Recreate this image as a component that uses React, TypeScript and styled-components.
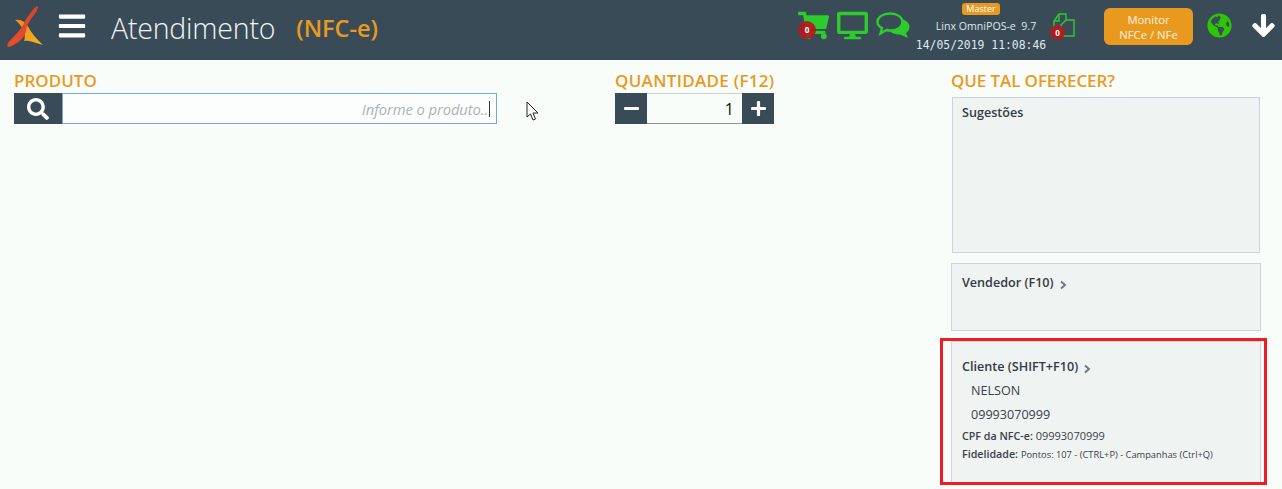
import styled, { createGlobalStyle } from "styled-components";
import {
  FaArrowDown,
  FaBars,
  FaDesktop,
  FaGlobeAmericas,
  FaMinus,
  FaPlus,
  FaSearch,
  FaShoppingCart,
} from "react-icons/fa";

const GlobalStyle = createGlobalStyle`
  html, body {
    margin: 0;
    padding: 0;
    height: 489px;
    overflow: hidden;
    background: #f8fdfa;
    font-family: "Open Sans", "Noto Sans", sans-serif;
    color: #333b45;
  }
  * { box-sizing: border-box; }
`;

const Page = styled.div`
  position: relative;
  width: 1282px;
  height: 489px;
`;

const Header = styled.header`
  height: 60px;
  background: #3a4b58;
  display: flex;
  align-items: center;
  padding-left: 7px;
`;

const Logo = styled.svg`
  width: 38px;
  height: 44px;
  margin-top: -4px;
  flex-shrink: 0;
`;

const Burger = styled.div`
  color: #fff;
  font-size: 30px;
  display: flex;
  margin: -8px 0 0 12px;
`;

const PageTitle = styled.h1`
  margin: 0 0 4px 24px;
  font-size: 28.5px;
  font-weight: 300;
  color: #eef5f5;
  letter-spacing: -0.2px;
`;

const Mode = styled.span`
  margin: 0 0 4px 21px;
  font-size: 23.5px;
  font-weight: 600;
  color: #e99a1e;
`;

const Tools = styled.div`
  margin-left: auto;
  display: flex;
  align-items: center;
  height: 100%;
`;

const GreenIcon = styled.div<{ $size: number; $left: number }>`
  position: relative;
  display: flex;
  color: #2ecb2e;
  font-size: ${(p) => p.$size}px;
  margin: -10px 0 0 ${(p) => p.$left}px;
`;

const Badge = styled.span<{ $small?: boolean }>`
  position: absolute;
  left: ${(p) => (p.$small ? "-1px" : "0")};
  top: ${(p) => (p.$small ? "12px" : "11px")};
  width: ${(p) => (p.$small ? "15px" : "18px")};
  height: ${(p) => (p.$small ? "15px" : "18px")};
  border-radius: 50%;
  background: rgba(181, 25, 28, 0.92);
  color: #fff;
  font-size: 8px;
  font-weight: 700;
  display: flex;
  align-items: center;
  justify-content: center;
`;

const Version = styled.div`
  width: 132px;
  margin: -6px 0 0 5px;
  display: flex;
  flex-direction: column;
  align-items: center;
  color: #dfe8ec;
`;

const MasterTag = styled.span`
  background: #e99a1e;
  color: #fff;
  font-size: 9px;
  line-height: 12px;
  height: 12px;
  padding: 0 4px;
  border-radius: 3px;
`;

const VersionName = styled.span`
  font-size: 10.6px;
  line-height: 14px;
  margin: 4px 0 0 10px;
  white-space: pre;
`;

const Clock = styled.span`
  font-family: "DejaVu Sans Mono", monospace;
  font-size: 11.4px;
  line-height: 14px;
  margin-top: 5px;
  letter-spacing: 0;
  white-space: nowrap;
`;

const MonitorButton = styled.button`
  width: 89px;
  height: 37px;
  margin: -7px 0 0 29px;
  border: 0;
  border-radius: 6px;
  background: #e99a1e;
  color: #fdf3e2;
  font-family: inherit;
  font-size: 11.3px;
  line-height: 15px;
  padding: 0;
`;

const Globe = styled.div`
  display: flex;
  color: #2fc406;
  font-size: 25px;
  margin: -10px 0 0 14px;
`;

const DownArrow = styled.div`
  display: flex;
  color: #fff;
  font-size: 25px;
  margin: -10px 6px 0 19px;
  svg {
    stroke: #fff;
    stroke-width: 24px;
  }
`;

const Main = styled.main`
  display: flex;
  padding: 12px 21px 0 14px;
`;

const ProductColumn = styled.section`
  width: 483px;
`;

const QuantityColumn = styled.section`
  width: 159px;
  margin-left: 118px;
`;

const SideColumn = styled.aside`
  width: 310px;
  margin-left: 177px;
`;

const Label = styled.h2<{ $tracking?: number }>`
  margin: 0 0 3px;
  font-size: 17px;
  line-height: 18px;
  font-weight: 600;
  color: #e99a1e;
  white-space: nowrap;
  letter-spacing: ${(p) => p.$tracking ?? 0}px;
`;

const SearchRow = styled.div`
  display: flex;
  height: 31px;
`;

const SquareButton = styled.div<{ $width: number }>`
  width: ${(p) => p.$width}px;
  background: #3a4b58;
  color: #fff;
  display: flex;
  align-items: center;
  justify-content: center;
  flex-shrink: 0;
`;

const SearchIcon = styled(FaSearch)`
  font-size: 22px;
`;

const SearchField = styled.div`
  flex: 1;
  border: 1px solid #74a8d8;
  background: #fbfefd;
  display: flex;
  align-items: center;
  justify-content: flex-end;
  padding: 0 6px 0 0;
  font-size: 14.8px;
  font-style: italic;
  color: #aeb2b4;
  letter-spacing: -0.1px;
`;

const Caret = styled.span`
  width: 1px;
  height: 16px;
  background: #333;
  margin-left: 1px;
`;

const QuantityValue = styled.div`
  flex: 1;
  border-top: 1px solid #c9cfd4;
  border-bottom: 1px solid #8a949c;
  display: flex;
  align-items: center;
  justify-content: flex-end;
  padding-right: 8px;
  font-size: 16px;
  color: #111;
`;

const Card = styled.div<{ $height: number; $inset?: boolean; $top: number; $pad: number }>`
  position: relative;
  height: ${(p) => p.$height}px;
  margin: ${(p) => p.$top}px ${(p) => (p.$inset ? "1px" : "0")} 0;
  background: #eff3f1;
  border: 1.5px solid #ced3e2;
  padding: ${(p) => p.$pad}px ${(p) => (p.$inset ? "9px" : "10px")};
`;

const CardTitle = styled.div`
  display: flex;
  align-items: center;
  font-size: 12.6px;
  line-height: 16px;
  font-weight: 600;
  color: #333b45;
`;

const Chevron = styled.svg`
  width: 8px;
  height: 10px;
  margin: 3px 0 0 5px;
`;

const CustomerLine = styled.div`
  margin: 7px 0 0 9px;
  font-size: 12.6px;
  line-height: 17px;
  color: #3c4149;
`;

const InfoLine = styled.div<{ $top: number }>`
  margin-top: ${(p) => p.$top}px;
  font-size: 11px;
  line-height: 14px;
  color: #3c4149;
  white-space: nowrap;
  strong {
    font-weight: 600;
    font-size: 10.7px;
  }
`;

const Fine = styled.span`
  font-size: 9.3px;
`;

const Highlight = styled.div`
  position: absolute;
  left: -12px;
  top: -4px;
  width: 327px;
  height: 147px;
  border: 3px solid #ee1c25;
  pointer-events: none;
`;

const CursorMark = styled.svg`
  position: absolute;
  left: 526px;
  top: 101px;
  width: 14px;
  height: 21px;
`;

const Hint = styled.span`
  white-space: nowrap;
`;

function BrandMark() {
  return (
    <Logo viewBox="0 0 38 44">
      <defs>
        <linearGradient id="brandYellow" x1="0" y1="0" x2="1" y2="0.4">
          <stop offset="0" stopColor="#f08a1c" />
          <stop offset="1" stopColor="#f5b01c" />
        </linearGradient>
        <linearGradient id="brandRed" x1="0" y1="1" x2="1" y2="0">
          <stop offset="0" stopColor="#e8502a" />
          <stop offset="1" stopColor="#d8432c" />
        </linearGradient>
      </defs>
      <path
        d="M8 14 C13 13 17 15 20 19 C24 26 29 33 36 39 C28 37 22 34 17 35 C20 28 15 19 8 14Z"
        fill="url(#brandYellow)"
      />
      <path
        d="M30 0 C32 0 31 3 29 6 C25 12 20 17 19 25 C18 32 10 38 2 41 C0 41 0 39 1 37 C6 31 13 25 16 19 C20 11 26 3 30 0Z"
        fill="url(#brandRed)"
      />
    </Logo>
  );
}

function NotesIcon() {
  return (
    <svg width="24" height="24" viewBox="0 0 24 24" fill="none" stroke="currentColor" strokeWidth="1.4">
      <path d="M3 8 L8 1 H15 V7 H23 V23 H10 V17 H3 Z" />
      <path d="M8 1 V8 H3" />
      <path d="M15 7 L10 12 V17" />
    </svg>
  );
}

function BubblesIcon() {
  return (
    <svg width="34" height="27" viewBox="0 0 34 27">
      <path
        d="M22 7 C29 7 33.500 10.500 33.500 15 C33.500 18 31.500 20 30 21 L32 26 L24 22.500 C19 22.500 14 20.500 13 18 Z"
        fill="currentColor"
      />
      <path
        d="M14 1.500 C21 1.500 26.500 5 26.500 10 C26.500 15 21 18.500 14 18.500 C12.500 18.500 11.500 18.300 10.500 18 L4.500 21.500 L6 16 C3 14.500 1.500 12.500 1.500 10 C1.500 5 7 1.500 14 1.500 Z"
        fill="#3a4b58"
        stroke="currentColor"
        strokeWidth="2.400"
      />
    </svg>
  );
}

function ChevronMark() {
  return (
    <Chevron viewBox="0 0 8 10">
      <path d="M2 1.500 L6 5 L2 8.500" fill="none" stroke="#6d7680" strokeWidth="1.900" />
    </Chevron>
  );
}

export default function App() {
  return (
    <Page>
      <GlobalStyle />
      <Header>
        <BrandMark />
        <Burger>
          <FaBars />
        </Burger>
        <PageTitle>Atendimento</PageTitle>
        <Mode>(NFC-e)</Mode>
        <Tools>
          <GreenIcon $size={31} $left={0}>
            <FaShoppingCart />
            <Badge>0</Badge>
          </GreenIcon>
          <GreenIcon $size={31} $left={8}>
            <FaDesktop />
          </GreenIcon>
          <GreenIcon $size={33} $left={8}>
            <BubblesIcon />
          </GreenIcon>
          <Version>
            <MasterTag>Master</MasterTag>
            <VersionName>Linx OmniPOS-e  9.7</VersionName>
            <Clock>14/05/2019 11:08:46</Clock>
          </Version>
          <GreenIcon $size={24} $left={4}>
            <NotesIcon />
            <Badge $small>0</Badge>
          </GreenIcon>
          <MonitorButton>
            Monitor
            <br />
            NFCe / NFe
          </MonitorButton>
          <Globe>
            <FaGlobeAmericas />
          </Globe>
          <DownArrow>
            <FaArrowDown />
          </DownArrow>
        </Tools>
      </Header>
      <Main>
        <ProductColumn>
          <Label>PRODUTO</Label>
          <SearchRow>
            <SquareButton $width={48}>
              <SearchIcon />
            </SquareButton>
            <SearchField>
              <Hint>Informe o produto..</Hint>
              <Caret />
            </SearchField>
          </SearchRow>
        </ProductColumn>
        <QuantityColumn>
          <Label $tracking={0.3}>QUANTIDADE (F12)</Label>
          <SearchRow>
            <SquareButton $width={32}>
              <FaMinus size={17} />
            </SquareButton>
            <QuantityValue>1</QuantityValue>
            <SquareButton $width={32}>
              <FaPlus size={17} />
            </SquareButton>
          </SearchRow>
        </QuantityColumn>
        <SideColumn>
          <Label $tracking={-0.1}>QUE TAL OFERECER?</Label>
          <Card $height={156} $top={7} $pad={7} $inset>
            <CardTitle>Sugestões</CardTitle>
          </Card>
          <Card $height={68} $top={10} $pad={11}>
            <CardTitle>
              Vendedor (F10)
              <ChevronMark />
            </CardTitle>
          </Card>
          <Card $height={144} $top={10} $pad={17}>
            <CardTitle>
              Cliente (SHIFT+F10)
              <ChevronMark />
            </CardTitle>
            <CustomerLine>NELSON</CustomerLine>
            <CustomerLine>09993070999</CustomerLine>
            <InfoLine $top={6}>
              <strong>CPF da NFC-e:</strong> 09993070999
            </InfoLine>
            <InfoLine $top={4}>
              <strong>Fidelidade:</strong> <Fine>Pontos: 107 - (CTRL+P) - Campanhas (Ctrl+Q)</Fine>
            </InfoLine>
            <Highlight />
          </Card>
        </SideColumn>
      </Main>
      <CursorMark viewBox="0 0 14 21">
        <path d="M1 1 V16 L4.5 13 L7 19 L9.5 18 L7 12 H12 Z" fill="#fff" stroke="#222" strokeWidth="1" />
      </CursorMark>
    </Page>
  );
}
